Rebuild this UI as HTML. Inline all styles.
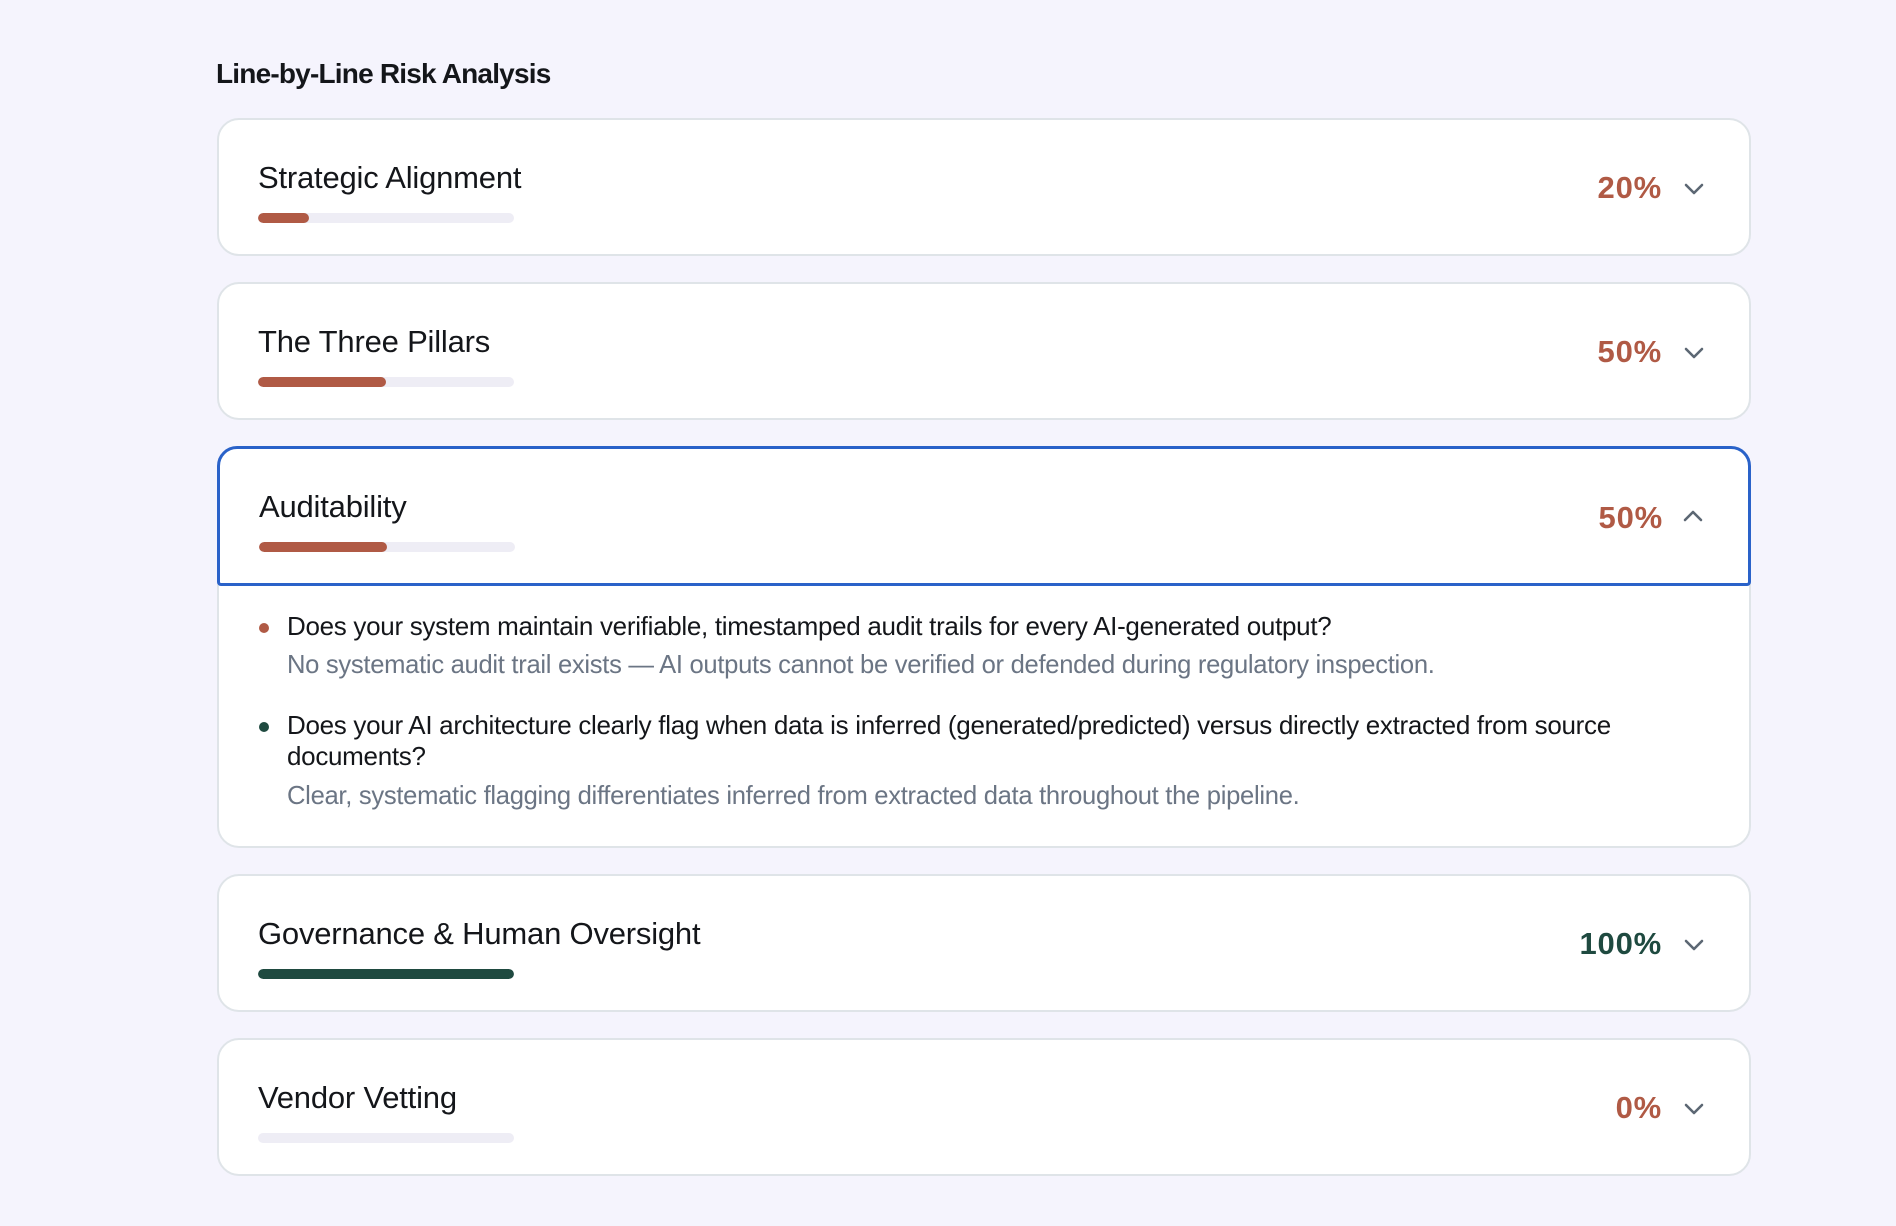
<!DOCTYPE html>
<html><head><meta charset="utf-8"><style>
*{margin:0;padding:0;box-sizing:border-box}
body{width:1896px;height:1226px;background:#f5f4fd;font-family:"Liberation Sans",sans-serif;position:relative;overflow:hidden;color:#14161a}
.h{position:absolute;left:216px;top:58px;font-size:28px;font-weight:bold;letter-spacing:-0.8px}
.card{position:absolute;left:217px;width:1534px;background:#fff;border:2px solid #dfe4e8;border-radius:22px}
.t{position:absolute;left:39px;font-size:31px;letter-spacing:-0.2px}
.bar{position:absolute;left:39px;width:256px;height:10px;border-radius:5px;background:#eeedf5;overflow:hidden}
.bar i{display:block;height:100%;border-radius:5px;background:#b05a45}
.p{position:absolute;right:87px;font-size:31px;font-weight:bold;color:#b05a45;letter-spacing:0.8px}
.c{position:absolute;right:44px;width:22px;height:14px}
.hd{position:absolute;left:0;top:0;right:0;height:137px}
.q{position:absolute;left:68px;font-size:26px;letter-spacing:-0.3px;line-height:31px;width:1440px}
.a{position:absolute;left:68px;font-size:25.6px;color:#6b7584;letter-spacing:-0.3px}
.dot{position:absolute;left:40px;width:10px;height:10px;border-radius:50%}
</style></head><body>
<div class="h">Line-by-Line Risk Analysis</div>

<div class="card" style="top:118px;height:138px">
 <div class="t" style="top:40px">Strategic Alignment</div>
 <div class="bar" style="top:93px"><i style="width:20%"></i></div>
 <div class="p" style="top:50px">20%</div>
 <svg class="c" style="top:62px" viewBox="0 0 22 14"><path d="M3 3l8 8 8-8" fill="none" stroke="#5c6773" stroke-width="2.6" stroke-linecap="round" stroke-linejoin="round"/></svg>
</div>

<div class="card" style="top:282px;height:138px">
 <div class="t" style="top:40px">The Three Pillars</div>
 <div class="bar" style="top:93px"><i style="width:50%"></i></div>
 <div class="p" style="top:50px">50%</div>
 <svg class="c" style="top:62px" viewBox="0 0 22 14"><path d="M3 3l8 8 8-8" fill="none" stroke="#5c6773" stroke-width="2.6" stroke-linecap="round" stroke-linejoin="round"/></svg>
</div>

<div class="card" style="top:446px;height:402px">
 <div class="hd" style="border:3px solid #2a62c9;border-radius:20px 20px 4px 4px;left:-2px;top:-2px;right:-2px;height:140px">
  <div class="t" style="top:40px;left:39px">Auditability</div>
  <div class="bar" style="top:93px;left:39px"><i style="width:50%"></i></div>
  <div class="p" style="top:51px;right:85px">50%</div>
  <svg class="c" style="top:60px;right:44px" viewBox="0 0 22 14"><path d="M3 11l8-8 8 8" fill="none" stroke="#5c6773" stroke-width="2.6" stroke-linecap="round" stroke-linejoin="round"/></svg>
 </div>
 <div class="dot" style="top:175px;background:#b05a45"></div>
 <div class="q" style="top:163px">Does your system maintain verifiable, timestamped audit trails for every AI-generated output?</div>
 <div class="a" style="top:203px">No systematic audit trail exists — AI outputs cannot be verified or defended during regulatory inspection.</div>
 <div class="dot" style="top:274px;background:#1f4a40"></div>
 <div class="q" style="top:262px">Does your AI architecture clearly flag when data is inferred (generated/predicted) versus directly extracted from source documents?</div>
 <div class="a" style="top:334px">Clear, systematic flagging differentiates inferred from extracted data throughout the pipeline.</div>
</div>

<div class="card" style="top:874px;height:138px">
 <div class="t" style="top:40px">Governance &amp; Human Oversight</div>
 <div class="bar" style="top:93px"><i style="width:100%;background:#1f4a40"></i></div>
 <div class="p" style="top:50px;color:#1f4a40">100%</div>
 <svg class="c" style="top:62px" viewBox="0 0 22 14"><path d="M3 3l8 8 8-8" fill="none" stroke="#5c6773" stroke-width="2.6" stroke-linecap="round" stroke-linejoin="round"/></svg>
</div>

<div class="card" style="top:1038px;height:138px">
 <div class="t" style="top:40px">Vendor Vetting</div>
 <div class="bar" style="top:93px"><i style="width:0"></i></div>
 <div class="p" style="top:50px">0%</div>
 <svg class="c" style="top:62px" viewBox="0 0 22 14"><path d="M3 3l8 8 8-8" fill="none" stroke="#5c6773" stroke-width="2.6" stroke-linecap="round" stroke-linejoin="round"/></svg>
</div>
</body></html>
